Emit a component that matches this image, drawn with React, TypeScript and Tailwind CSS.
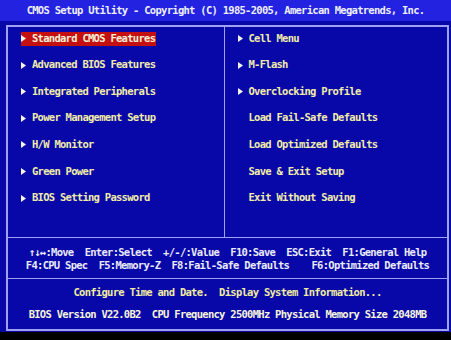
const left = [
  "Standard CMOS Features",
  "Advanced BIOS Features",
  "Integrated Peripherals",
  "Power Management Setup",
  "H/W Monitor",
  "Green Power",
  "BIOS Setting Password",
];

const right: [string, boolean][] = [
  ["Cell Menu", true],
  ["M-Flash", true],
  ["Overclocking Profile", true],
  ["Load Fail-Safe Defaults", false],
  ["Load Optimized Defaults", false],
  ["Save & Exit Setup", false],
  ["Exit Without Saving", false],
];

function Arrow() {
  return (
    <svg width="5" height="7" viewBox="0 0 5 7" className="block">
      <path d="M0 0 L5 3.5 L0 7 Z" fill="#f4f4e8" />
    </svg>
  );
}

function Item({ label, arrow, active }: { label: string; arrow: boolean; active?: boolean }) {
  return (
    <div className={"flex h-[14px] w-fit items-center pr-[1px] " + (active ? "bg-[#c41010] text-[#f4f0d8]" : "")}>
      <span className="flex w-[11px] items-center">{arrow && <Arrow />}</span>
      <span>{label}</span>
    </div>
  );
}

export default function App() {
  return (
    <div className="flex h-[340px] w-[451px] flex-col bg-[#0808a8] font-['DejaVu_Sans_Mono',monospace] text-[10.5px] font-bold tracking-[-0.72px] text-[#f0eca8]">
      <div className="flex h-[21px] items-center justify-center bg-[#2222e0] text-[#eeeefa]">
        CMOS Setup Utility - Copyright (C) 1985-2005, American Megatrends, Inc.
      </div>

      <div className="ml-[6px] mt-[4px] flex h-[306px] w-[443px] flex-col border-2 border-[#a0a0f0]">
        <div className="grid h-[210px] grid-cols-[217px_1fr]">
          <div className="flex flex-col gap-[12.6px] border-r border-[#a0a0f0] pl-[13px] pt-[4.5px]">
            {left.map((l, i) => (
              <Item key={l} label={l} arrow active={i === 0} />
            ))}
          </div>
          <div className="flex flex-col gap-[12.6px] pl-[12.5px] pt-[4.5px]">
            {right.map(([l, a]) => (
              <Item key={l} label={l} arrow={a} />
            ))}
          </div>
        </div>

        <div className="flex h-[41px] flex-col items-center justify-center gap-[1px] whitespace-pre border-t border-[#a0a0f0] leading-[12px] text-[#eaeafa]">
          <div>↑↓↔:Move  Enter:Select  +/-/:Value  F10:Save  ESC:Exit  F1:General Help</div>
          <div>F4:CPU Spec  F5:Memory-Z  F8:Fail-Safe Defaults    F6:Optimized Defaults</div>
        </div>

        <div className="flex flex-1 flex-col items-center gap-[10px] whitespace-pre border-t border-[#a0a0f0] pt-[7px] leading-[12px]">
          <div className="text-[#f0eca0]">Configure Time and Date.  Display System Information...</div>
          <div className="text-[#f6f4dc]">BIOS Version V22.0B2  CPU Frequency 2500MHz Physical Memory Size 2048MB</div>
        </div>
      </div>

      <div className="mt-[1px] flex-1 bg-black" />
    </div>
  );
}
